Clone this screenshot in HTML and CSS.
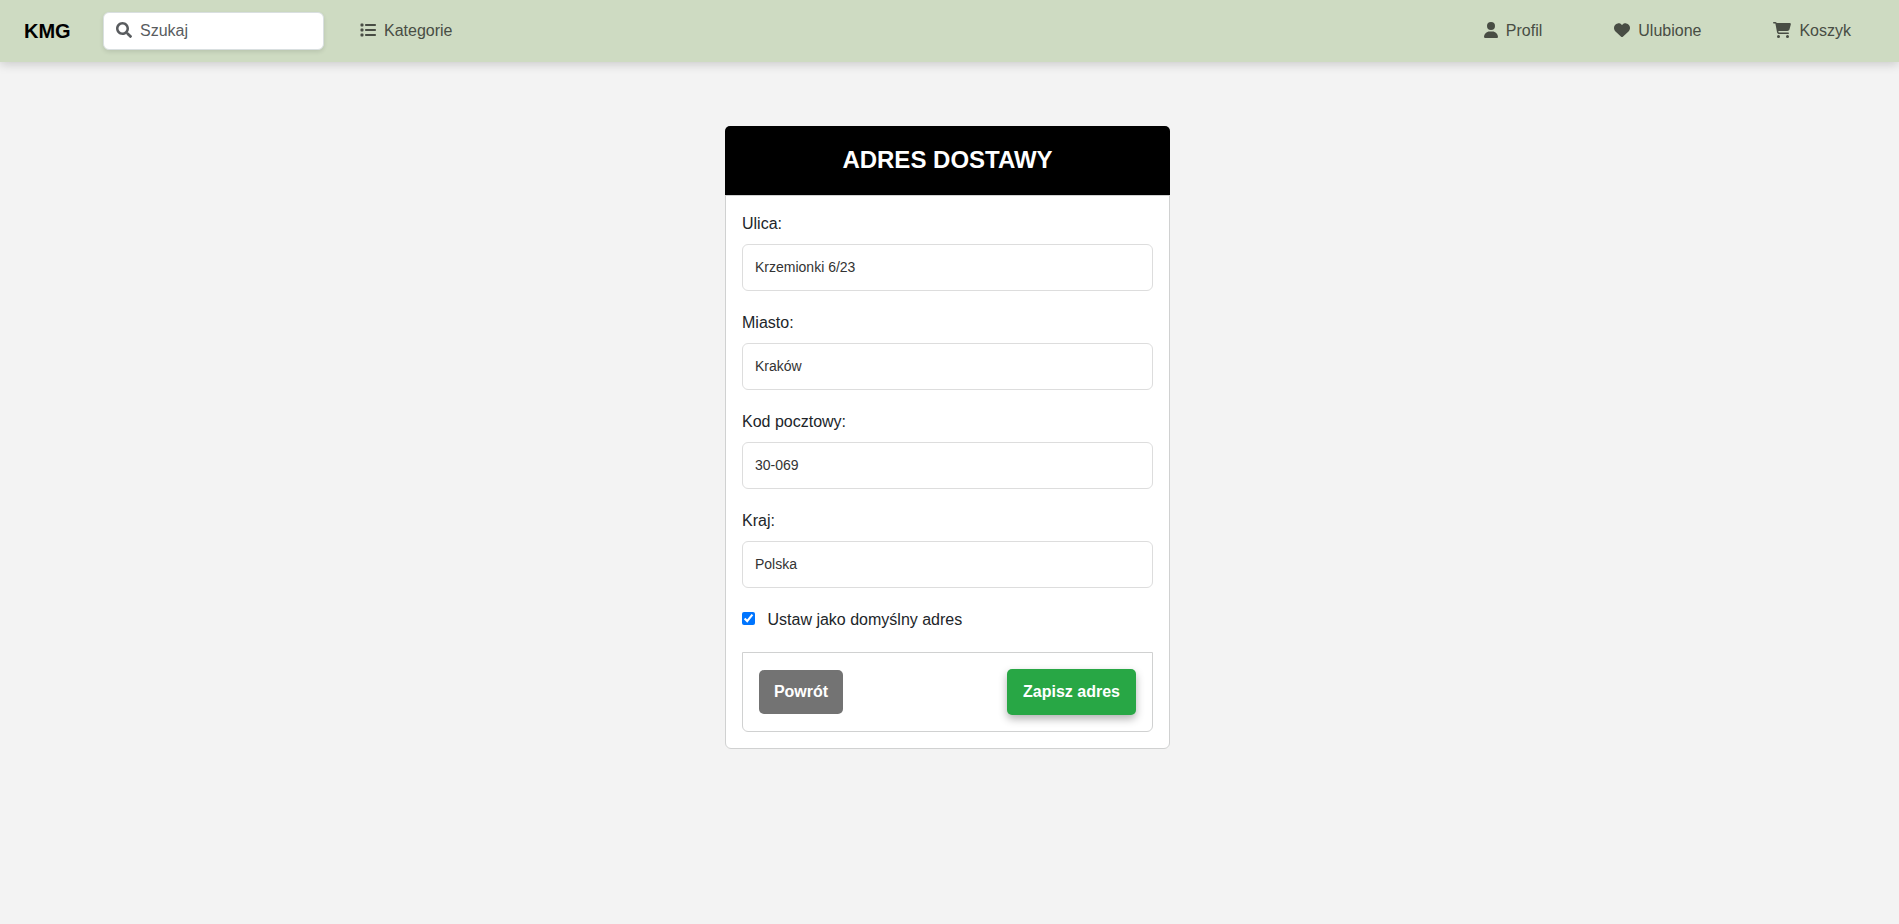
FILE: index.html
```
<!DOCTYPE html>
<html lang="pl">
<head>
<meta charset="utf-8">
<title>KMG</title>
<link rel="stylesheet" href="styles.css">
</head>
<body>
<nav class="navbar">
  <a class="brand">KMG</a>
  <div class="search">
    <svg class="icon icon-search" viewBox="0 0 512 512"><path d="M505 442.700L405.300 343c-4.500-4.500-10.600-7-17-7H372c27.600-35.300 44-79.700 44-128C416 93.100 322.900 0 208 0S0 93.100 0 208s93.100 208 208 208c48.300 0 92.700-16.400 128-44v16.300c0 6.400 2.500 12.500 7 17l99.700 99.700c9.400 9.400 24.600 9.400 33.900 0l28.300-28.300c9.400-9.400 9.400-24.600.1-34zM208 336c-70.700 0-128-57.200-128-128 0-70.700 57.200-128 128-128 70.700 0 128 57.200 128 128 0 70.700-57.200 128-128 128z"/></svg>
    <span>Szukaj</span>
  </div>
  <a class="link categories"><svg class="icon" viewBox="0 0 512 512"><path d="M40 48C26.700 48 16 58.700 16 72v48c0 13.300 10.700 24 24 24H88c13.300 0 24-10.700 24-24V72c0-13.300-10.700-24-24-24H40zM192 64c-17.700 0-32 14.300-32 32s14.300 32 32 32H480c17.700 0 32-14.300 32-32s-14.300-32-32-32H192zm0 160c-17.700 0-32 14.300-32 32s14.300 32 32 32H480c17.700 0 32-14.300 32-32s-14.300-32-32-32H192zm0 160c-17.700 0-32 14.300-32 32s14.300 32 32 32H480c17.700 0 32-14.300 32-32s-14.300-32-32-32H192zM16 232v48c0 13.300 10.700 24 24 24H88c13.300 0 24-10.700 24-24V232c0-13.300-10.700-24-24-24H40c-13.300 0-24 10.700-24 24zM40 368c-13.300 0-24 10.700-24 24v48c0 13.300 10.700 24 24 24H88c13.300 0 24-10.700 24-24V392c0-13.300-10.700-24-24-24H40z"/></svg>Kategorie</a>
  <div class="links">
    <a class="link"><svg class="icon icon-user" viewBox="0 0 448 512"><path d="M224 256A128 128 0 1 0 224 0a128 128 0 1 0 0 256zm-45.700 48C79.800 304 0 383.800 0 482.300C0 498.700 13.300 512 29.700 512H418.300c16.400 0 29.700-13.300 29.700-29.700C448 383.800 368.200 304 269.700 304H178.300z"/></svg>Profil</a>
    <a class="link"><svg class="icon" viewBox="0 0 512 512"><path d="M47.600 300.400L228.300 469.100c7.500 7 17.400 10.900 27.700 10.900s20.200-3.900 27.700-10.900L464.400 300.400c30.400-28.300 47.600-68 47.600-109.500v-5.800c0-69.900-50.500-129.500-119.400-141C347 36.500 300.600 51.400 268 84L256 96 244 84c-32.600-32.600-79-47.500-124.600-39.900C50.500 55.600 0 115.200 0 185.100v5.800c0 41.500 17.200 81.200 47.600 109.500z"/></svg>Ulubione</a>
    <a class="link"><svg class="icon icon-cart" viewBox="0 0 576 512"><path d="M0 24C0 10.700 10.700 0 24 0H69.500c22 0 41.500 12.800 50.600 32h411c26.300 0 45.500 25 38.600 50.400l-41 152.300c-8.500 31.400-37 53.300-69.500 53.300H170.700l5.400 28.500c2.200 11.300 12.100 19.500 23.600 19.500H488c13.300 0 24 10.700 24 24s-10.700 24-24 24H199.700c-34.600 0-64.300-24.600-70.700-58.500L77.400 54.500c-.7-3.800-4-6.500-7.900-6.500H24C10.700 48 0 37.300 0 24zM128 464a48 48 0 1 1 96 0 48 48 0 1 1 -96 0zm336-48a48 48 0 1 1 0 96 48 48 0 1 1 0-96z"/></svg>Koszyk</a>
  </div>
</nav>
<main class="page">
  <form class="card">
    <h2 class="card-header">ADRES DOSTAWY</h2>
    <div class="card-body">
      <label class="field">Ulica:<input class="input" type="text" value="Krzemionki 6/23"></label>
      <label class="field">Miasto:<input class="input" type="text" value="Kraków"></label>
      <label class="field">Kod pocztowy:<input class="input" type="text" value="30-069"></label>
      <label class="field">Kraj:<input class="input" type="text" value="Polska"></label>
      <label class="default-address"><input class="checkbox" type="checkbox" checked>Ustaw jako domyślny adres</label>
      <div class="card-footer">
        <button class="button back" type="button">Powrót</button>
        <button class="button save" type="button">Zapisz adres</button>
      </div>
    </div>
  </form>
</main>
</body>
</html>
```
FILE: styles.css
```
* { box-sizing: border-box; }
body {
  margin: 0;
  min-height: 100vh;
  background: #f3f3f3;
  color: #212529;
  font: 16px/24px "Liberation Sans", Arial, sans-serif;
}
.navbar {
  display: flex;
  align-items: center;
  height: 62px;
  padding: 0 48px 0 24px;
  background: #cedbc2;
  box-shadow: 0 2px 10px rgba(0, 0, 0, .18);
}
.brand {
  width: 79px;
  color: #000;
  font-size: 20px;
  font-weight: bold;
}
.search {
  display: flex;
  align-items: center;
  gap: 8px;
  width: 221px;
  height: 38px;
  padding: 0 0 0 12px;
  border: 1px solid #d9dfe0;
  border-radius: 6px;
  background: #fff;
  color: #595c5f;
  box-shadow: 0 2px 4px rgba(0, 0, 0, .1);
}
.icon { width: 16px; height: 16px; margin-bottom: 2px; fill: currentColor; }
.icon-user { width: 14px; }
.icon-cart { width: 18px; }
.link {
  display: flex;
  align-items: center;
  gap: 8px;
  color: #484d44;
}
.categories { margin-left: 36px; }
.links { display: flex; gap: 72px; margin-left: auto; }
.page { display: flex; justify-content: center; padding: 64px 4px 0 0; }
.card {
  width: 445px;
  border: 1px solid #d0d1d1;
  border-radius: 6px;
  background: #fff;
}
.card-header {
  height: 70px;
  margin: -1px -1px 0;
  padding-top: 17px;
  border-bottom: 1px solid #d0d1d1;
  border-radius: 5px 5px 0 0;
  background: #000;
  background-clip: padding-box;
  color: #fff;
  font-size: 24px;
  line-height: 33px;
  text-align: center;
}
.card-body { padding: 16px; }
.field { display: block; margin-bottom: 20px; }
.input {
  display: block;
  width: 100%;
  height: 47px;
  margin-top: 8px;
  padding: 0 12px 2px;
  border: 1px solid #ddd;
  border-radius: 6px;
  background: #fff;
  color: #333;
  font: 14px "Liberation Sans", Arial, sans-serif;
}
.default-address { display: flex; align-items: center; gap: 12.5px; margin-bottom: 20px; }
.checkbox { width: 13px; height: 13px; margin: 0 0 3px; accent-color: #0075ff; }
.card-footer {
  display: flex;
  justify-content: space-between;
  align-items: center;
  height: 80px;
  padding: 0 16px;
  border: 1px solid #d0d1d1;
  border-radius: 0 0 6px 6px;
}
.button {
  padding: 0;
  border: 0;
  border-radius: 5px;
  color: #fff;
  font: bold 16px "Liberation Sans", Arial, sans-serif;
}
.back { width: 84px; height: 44px; background: #737373; }
.save { width: 129px; height: 46px; background: #28a745; box-shadow: 0 4px 8px rgba(0, 0, 0, .3); }
```
